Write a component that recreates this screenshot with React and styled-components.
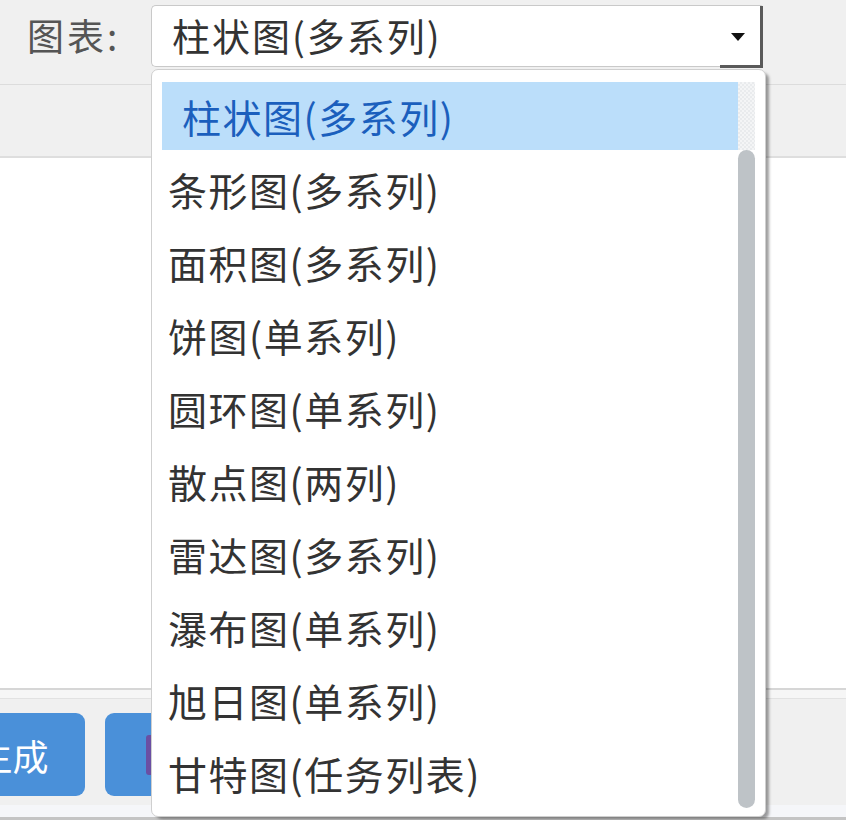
import React from 'react';
import styled, { createGlobalStyle } from 'styled-components';

const GlobalStyle = createGlobalStyle`
  html, body { margin: 0; padding: 0; }
  body {
    background: #f0f0f0;
    font-family: "Noto Sans CJK SC", "Noto Sans", sans-serif;
    overflow: hidden;
  }
`;

const options = [
  '柱状图(多系列)',
  '条形图(多系列)',
  '面积图(多系列)',
  '饼图(单系列)',
  '圆环图(单系列)',
  '散点图(两列)',
  '雷达图(多系列)',
  '瀑布图(单系列)',
  '旭日图(单系列)',
  '甘特图(任务列表)',
];

export default function App() {
  return (
    <>
      <GlobalStyle />
      <Page>
        <Toolbar>
          <Label>图表:</Label>
          <Select>
            <SelectValue>柱状图(多系列)</SelectValue>
            <ArrowBox>
              <Arrow />
            </ArrowBox>
          </Select>
        </Toolbar>
        <SubBar />
        <Content />
        <Footer>
          <FooterTop />
          <ButtonRow>
            <Button>生成</Button>
            <Button $wide>
              <svg width="14" height="40" viewBox="0 0 14 40">
                <rect x="1" y="0" width="12" height="40" rx="3" fill="#6a4fa3" />
              </svg>
            </Button>
          </ButtonRow>
          <FooterBottom />
        </Footer>

        <Dropdown>
          <List>
            {options.map((o, i) => (
              <Option key={o} $selected={i === 0}>{o}</Option>
            ))}
          </List>
          <Scrollbar>
            <Track />
            <Thumb />
          </Scrollbar>
        </Dropdown>
      </Page>
    </>
  );
}

const Page = styled.div`
  position: relative;
  height: 820px;
  display: flex;
  flex-direction: column;
  overflow: hidden;
`;

const Toolbar = styled.div`
  height: 85px;
  border-bottom: 1px solid #dcdcdc;
  background: #f0f0f0;
  display: flex;
  align-items: flex-start;
  padding: 5px 0 0 27px;
  box-sizing: border-box;
  gap: 32px;
`;

const Label = styled.div`
  width: 92px;
  height: 61px;
  line-height: 61px;
  font-size: 37px;
  color: #555;
  letter-spacing: 3px;
  white-space: nowrap;
`;

const Select = styled.div`
  width: 612px;
  height: 62px;
  box-sizing: border-box;
  background: #fff;
  border: 1px solid #c9c9c9;
  border-right: none;
  border-radius: 5px 3px 0 5px;
  display: flex;
  align-items: stretch;
`;

const SelectValue = styled.div`
  flex: 1;
  padding-left: 20px;
  font-size: 38px;
  letter-spacing: 2px;
  line-height: 58px;
  color: #333;
  white-space: nowrap;
`;

const ArrowBox = styled.div`
  width: 36px;
  margin-bottom: -2px;
  border-right: 3px solid #5a5a5a;
  border-bottom: 3px solid #5a5a5a;
  display: flex;
  align-items: center;
  justify-content: center;
  padding-right: 4px;
`;

const Arrow = styled.div`
  width: 0;
  height: 0;
  border-left: 7px solid transparent;
  border-right: 7px solid transparent;
  border-top: 8px solid #111;
  margin-top: 2px;
`;

const SubBar = styled.div`
  height: 71px;
  background: #f0f0f0;
  border-bottom: 2px solid #dedede;
`;

const Content = styled.div`
  flex: 1;
  background: #fff;
`;

const Footer = styled.div`
  height: 130px;
  display: flex;
  flex-direction: column;
  background: #f0f0f0;
  border-top: 2px solid #d6d6d6;
`;

const FooterTop = styled.div`
  height: 8px;
  background: #f6f6f6;
  border-bottom: 1px solid #e2e2e2;
`;

const ButtonRow = styled.div`
  display: flex;
  gap: 20px;
  padding-top: 14px;
  margin-left: -60px;
  height: 84px;
`;

const Button = styled.div`
  width: ${p => (p.$wide ? '200px' : '145px')};
  height: 83px;
  border-radius: 9px;
  background: #4a90d9;
  color: #fff;
  font-size: 36px;
  display: flex;
  align-items: center;
  justify-content: ${p => (p.$wide ? 'flex-start' : 'center')};
  padding-left: ${p => (p.$wide ? '40px' : '0')};
  box-sizing: border-box;
  white-space: nowrap;
`;

const FooterBottom = styled.div`
  margin-top: auto;
  height: 12px;
  background: #f5f6f9;
  border-bottom: 3px solid #c4c4c4;
`;

const Dropdown = styled.div`
  position: absolute;
  left: 151px;
  top: 69px;
  width: 615px;
  height: 748px;
  box-sizing: border-box;
  background: #fff;
  border: 1px solid #cfcfcf;
  border-radius: 7px;
  box-shadow: 4px 3px 3px -1px rgba(0, 0, 0, 0.38);
  display: flex;
  padding: 12px 10px 0 10px;
`;

const List = styled.div`
  flex: 1;
  display: flex;
  flex-direction: column;
  gap: 5px;
`;

const Option = styled.div`
  height: 68px;
  line-height: 68px;
  font-size: 39px;
  letter-spacing: 1.5px;
  white-space: nowrap;
  padding-left: ${p => (p.$selected ? '20px' : '6px')};
  background: ${p => (p.$selected ? '#bbdefa' : 'transparent')};
  color: ${p => (p.$selected ? '#1b5fbd' : '#333')};
`;

const Scrollbar = styled.div`
  width: 17px;
  display: flex;
  flex-direction: column;
`;

const Track = styled.div`
  height: 68px;
  background-color: #f4f5f6;
  background-image:
    linear-gradient(45deg, #e9ebed 25%, transparent 25%, transparent 75%, #e9ebed 75%),
    linear-gradient(45deg, #e9ebed 25%, transparent 25%, transparent 75%, #e9ebed 75%);
  background-size: 4px 4px;
  background-position: 0 0, 2px 2px;
`;

const Thumb = styled.div`
  height: 658px;
  background: #bec3c7;
  border-radius: 9px;
`;
